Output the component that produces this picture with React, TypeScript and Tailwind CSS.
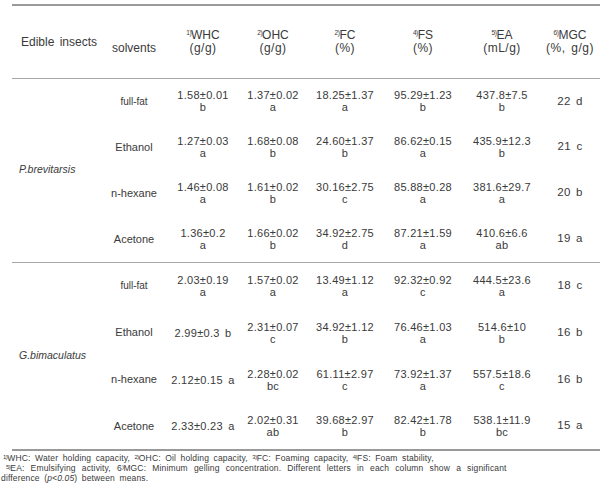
import React from "react";

type Cell = string | [string, string];
type Row = [string, Cell, Cell, Cell, Cell, Cell, string];

const g1: Row[] = [
  ["full-fat", ["1.58±0.01", "b"], ["1.37±0.02", "a"], ["18.25±1.37", "a"], ["95.29±1.23", "b"], ["437.8±7.5", "b"], "22 d"],
  ["Ethanol", ["1.27±0.03", "a"], ["1.68±0.08", "b"], ["24.60±1.37", "b"], ["86.62±0.15", "a"], ["435.9±12.3", "b"], "21 c"],
  ["n-hexane", ["1.46±0.08", "a"], ["1.61±0.02", "b"], ["30.16±2.75", "c"], ["85.88±0.28", "a"], ["381.6±29.7", "a"], "20 b"],
  ["Acetone", ["1.36±0.2", "a"], ["1.66±0.02", "b"], ["34.92±2.75", "d"], ["87.21±1.59", "a"], ["410.6±6.6", "ab"], "19 a"],
];

const g2: Row[] = [
  ["full-fat", ["2.03±0.19", "a"], ["1.57±0.02", "a"], ["13.49±1.12", "a"], ["92.32±0.92", "c"], ["444.5±23.6", "a"], "18 c"],
  ["Ethanol", "2.99±0.3 b", ["2.31±0.07", "c"], ["34.92±1.12", "b"], ["76.46±1.03", "a"], ["514.6±10", "b"], "16 b"],
  ["n-hexane", "2.12±0.15 a", ["2.28±0.02", "bc"], ["61.11±2.97", "c"], ["73.92±1.37", "a"], ["557.5±18.6", "c"], "16 b"],
  ["Acetone", "2.33±0.23 a", ["2.02±0.31", "ab"], ["39.68±2.97", "b"], ["82.42±1.78", "b"], ["538.1±11.9", "bc"], "15 a"],
];

function Val({ c }: { c: Cell }) {
  if (typeof c === "string") return <span className="[word-spacing:2px]">{c}</span>;
  return (
    <>
      <div>{c[0]}</div>
      <div>{c[1]}</div>
    </>
  );
}

function Sup({ t }: { t: string }) {
  return <span className="relative top-[-4px] text-[6.5px] leading-[6px] tracking-[-0.5px]">{t}</span>;
}

function FSup({ t }: { t: string }) {
  return <span className="relative top-[-2px] text-[6px] leading-[6px] tracking-[-0.5px]">{t}</span>;
}

function Group({ name, rows, h, last }: { name: string; rows: Row[]; h: string; last?: boolean }) {
  return (
    <>
      {rows.map((r, i) => (
        <tr
          key={i}
          className={`${h} ${i === rows.length - 1 ? (last ? "border-b-[2px] border-[#9a9a9a]" : "border-b border-[#a8a8a8]") : ""}`}
        >
          {i === 0 && (
            <td rowSpan={4} className="pl-[7px] text-left align-middle italic text-[10.5px]">
              {name}
            </td>
          )}
          <td className={`text-center align-middle ${r[0] === "full-fat" ? "text-[10px]" : "text-[11px]"}`}>{r[0]}</td>
          {[r[1], r[2], r[3], r[4], r[5]].map((c, j) => (
            <td key={j} className="text-center align-middle text-[11px] leading-[12px] tracking-[0.3px]">
              <Val c={c} />
            </td>
          ))}
          <td className="text-center align-middle text-[11.5px] tracking-[0.3px] [word-spacing:2px]">{r[6]}</td>
        </tr>
      ))}
    </>
  );
}

export default function App() {
  return (
    <div
      className="w-[610px] h-[489px] bg-white text-[#3a3a3a] text-[12px] pt-[4px]"
      style={{ fontFamily: '"Liberation Sans", Arial, sans-serif' }}
    >
      <table className="ml-[12px] w-[588px] table-fixed border-collapse">
        <colgroup>
          <col className="w-[88px]" />
          <col className="w-[68px]" />
          <col className="w-[70px]" />
          <col className="w-[70px]" />
          <col className="w-[74px]" />
          <col className="w-[82px]" />
          <col className="w-[76px]" />
          <col className="w-[60px]" />
        </colgroup>
        <thead>
          <tr className="h-[73px] border-t-[2px] border-b border-t-[#9a9a9a] border-b-[#a8a8a8]">
            <th className="pl-[9px] text-left font-normal align-middle [word-spacing:2px]">Edible insects</th>
            <th className="font-normal align-middle pt-[13px]">solvents</th>
            <th className="font-normal align-middle leading-[13px]">
              <div><Sup t="1)" />WHC</div>
              <div className="tracking-[0.5px]">(g/g)</div>
            </th>
            <th className="font-normal align-middle leading-[13px]">
              <div><Sup t="2)" />OHC</div>
              <div className="tracking-[0.5px]">(g/g)</div>
            </th>
            <th className="font-normal align-middle leading-[13px]">
              <div><Sup t="2)" />FC</div>
              <div className="tracking-[0.5px]">(%)</div>
            </th>
            <th className="font-normal align-middle leading-[13px]">
              <div><Sup t="4)" />FS</div>
              <div className="tracking-[0.5px]">(%)</div>
            </th>
            <th className="font-normal align-middle leading-[13px]">
              <div><Sup t="5)" />EA</div>
              <div className="tracking-[0.5px]">(mL/g)</div>
            </th>
            <th className="font-normal align-middle leading-[13px]">
              <div><Sup t="6)" />MGC</div>
              <div className="tracking-[0.5px] [word-spacing:2px]">(%, g/g)</div>
            </th>
          </tr>
        </thead>
        <tbody>
          <Group name="P.brevitarsis" rows={g1} h="h-[46px]" />
          <Group name="G.bimaculatus" rows={g2} h="h-[47px]" last />
        </tbody>
      </table>
      <div className="pl-[3px] pt-[2px] text-[8.5px] leading-[10px] tracking-[0.15px]">
        <div className="[word-spacing:2px]">
          <FSup t="1)" />WHC: Water holding capacity, <FSup t="2)" />OHC: Oil holding capacity, <FSup t="3)" />FC: Foaming capacity, <FSup t="4)" />FS: Foam stability,
        </div>
        <div className="pl-[3px] [word-spacing:3.6px]">
          <FSup t="5)" />EA: Emulsifying activity, 6<FSup t=")" />MGC: Minimum gelling concentration. Different letters in each column show a significant
        </div>
        <div className="-ml-[2px] [word-spacing:2px]">
          difference (<i>p&lt;0.05</i>) between means.
        </div>
      </div>
    </div>
  );
}
